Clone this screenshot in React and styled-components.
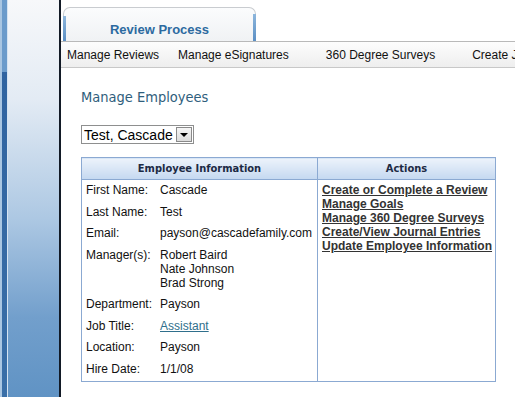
import styled, { createGlobalStyle } from "styled-components";

const Global = createGlobalStyle`
  html, body { margin: 0; padding: 0; background: #fff; overflow: hidden; }
  body { font-family: "Liberation Sans", Arial, sans-serif; }
`;

const Page = styled.div`
  display: flex;
  width: 515px;
  height: 397px;
  overflow: hidden;
`;

const Sidebar = styled.div`
  display: flex;
  width: 61px;
  flex-shrink: 0;
  border-right: 2px solid #121a26;
  box-sizing: border-box;
`;

const Rail = styled.div`
  width: 2px;
  background: #a9c6e2;
`;

const Scroll = styled.div`
  width: 5px;
  background: linear-gradient(#6b9bcb 0, #6b9bcb 72px, #2f63a0 72px, #3a6fa8 100%);
`;

const Glass = styled.div`
  flex: 1;
  border-left: 1px solid #d6e4f2;
  background: linear-gradient(#f7f8fa 0%, #e3ebf4 25%, #adc8e3 55%, #729fcc 80%, #6093c4 100%);
`;

const Main = styled.div`
  flex: 1;
  display: flex;
  flex-direction: column;
  min-width: 0;
`;

const TabStrip = styled.div`
  height: 42px;
  display: flex;
  align-items: flex-end;
  padding-left: 2px;
  border-bottom: 1px solid #b9b9b9;
  box-sizing: border-box;
`;

const Tab = styled.div`
  position: relative;
  width: 193px;
  height: 34px;
  box-sizing: border-box;
  border: 1px solid #c9ccd0;
  border-bottom: none;
  border-radius: 7px 7px 0 0;
  background: linear-gradient(#fbfcfd, #f0f2f4);
  display: flex;
  align-items: center;
  justify-content: center;
  padding-top: 9px;
  color: #2c6aa0;
  font-weight: bold;
  font-size: 13px;

  &::before, &::after {
    content: "";
    position: absolute;
    bottom: 0;
    width: 3px;
    background: linear-gradient(#8db6dc, #5b8fc4);
  }
  &::before { left: -1px; top: 8px; }
  &::after { right: -1px; top: 6px; }
`;

const NavBar = styled.div`
  height: 25px;
  display: flex;
  align-items: center;
  padding-left: 6px;
  white-space: nowrap;
  background: linear-gradient(#fdfdfd, #eeeeee);
  border-bottom: 1px solid #c8c8c8;
  font-size: 12px;
  color: #111;
`;

const NavItem = styled.span`
  margin-right: ${(p) => p.$gap}px;
`;

const Content = styled.div`
  padding: 20px 0 0 20px;
`;

const Title = styled.h2`
  margin: 0;
  font-family: "DejaVu Sans Condensed", "DejaVu Sans", sans-serif;
  font-weight: normal;
  font-size: 14.5px;
  color: #2f5e7c;
  line-height: 18px;
`;

const Select = styled.div`
  margin-top: 19px;
  display: inline-flex;
  align-items: center;
  height: 19px;
  box-sizing: border-box;
  border: 1px solid #8e8f8f;
  padding-left: 2px;
  font-size: 14px;
  color: #000;
`;

const Arrow = styled.span`
  margin-left: 3px;
  margin-right: 1px;
  width: 16px;
  height: 15px;
  box-sizing: border-box;
  border: 1px solid #8a8a8a;
  background: linear-gradient(#f6f6f6, #dcdcdc);
  display: flex;
  align-items: center;
  justify-content: center;

  &::after {
    content: "";
    border-left: 4px solid transparent;
    border-right: 4px solid transparent;
    border-top: 4px solid #000;
  }
`;

const Table = styled.table`
  margin-top: 13px;
  width: 415px;
  border-collapse: collapse;
  border: 1px solid #8ba9d2;
  font-size: 12px;
  color: #111;
`;

const Head = styled.th`
  height: 21px;
  padding: 0;
  border: 1px solid #8ba9d2;
  background: linear-gradient(#edf3fb, #c4d8f0);
  font-family: "DejaVu Sans Condensed", "DejaVu Sans", sans-serif;
  font-size: 11px;
  font-weight: bold;
  color: #1c2a44;
  width: ${(p) => p.$w}px;
`;

const Cell = styled.td`
  vertical-align: top;
  padding: 2px 0 5px 4px;
  border-right: 1px solid #8ba9d2;
`;

const Info = styled.div`
  display: grid;
  grid-template-columns: 74px 1fr;
  line-height: 14px;
  row-gap: 7.5px;
  padding-top: 1px;
`;

const Label = styled.div``;

const Value = styled.div``;

const JobLink = styled.a`
  color: #2f6f8c;
  text-decoration: underline;
`;

const Actions = styled.div`
  display: flex;
  flex-direction: column;
  line-height: 14px;
  padding-top: 1px;
`;

const ActionLink = styled.a`
  color: #333;
  font-weight: bold;
  text-decoration: underline;
`;

const rows = [
  ["First Name:", "Cascade"],
  ["Last Name:", "Test"],
  ["Email:", "payson@cascadefamily.com"],
  ["Manager(s):", ["Robert Baird", "Nate Johnson", "Brad Strong"]],
  ["Department:", "Payson"],
  ["Job Title:", "link"],
  ["Location:", "Payson"],
  ["Hire Date:", "1/1/08"],
];

const actions = [
  "Create or Complete a Review",
  "Manage Goals",
  "Manage 360 Degree Surveys",
  "Create/View Journal Entries",
  "Update Employee Information",
];

export default function App() {
  return (
    <Page>
      <Global />
      <Sidebar>
        <Rail />
        <Scroll />
        <Glass />
      </Sidebar>
      <Main>
        <TabStrip>
          <Tab>Review Process</Tab>
        </TabStrip>
        <NavBar>
          <NavItem $gap={19}>Manage Reviews</NavItem>
          <NavItem $gap={37}>Manage eSignatures</NavItem>
          <NavItem $gap={37}>360 Degree Surveys</NavItem>
          <NavItem $gap={0}>Create Journal Entries</NavItem>
        </NavBar>
        <Content>
          <Title>Manage Employees</Title>
          <Select>
            Test, Cascade
            <Arrow />
          </Select>
          <Table>
            <thead>
              <tr>
                <Head $w={235}>Employee Information</Head>
                <Head>Actions</Head>
              </tr>
            </thead>
            <tbody>
              <tr>
                <Cell>
                  <Info>
                    {rows.map(([label, value]) => (
                      <>
                        <Label key={label}>{label}</Label>
                        <Value key={label + "v"}>
                          {Array.isArray(value)
                            ? value.map((v) => <div key={v}>{v}</div>)
                            : value === "link"
                            ? <JobLink href="#">Assistant</JobLink>
                            : value}
                        </Value>
                      </>
                    ))}
                  </Info>
                </Cell>
                <Cell>
                  <Actions>
                    {actions.map((a) => (
                      <ActionLink key={a} href="#">{a}</ActionLink>
                    ))}
                  </Actions>
                </Cell>
              </tr>
            </tbody>
          </Table>
        </Content>
      </Main>
    </Page>
  );
}
